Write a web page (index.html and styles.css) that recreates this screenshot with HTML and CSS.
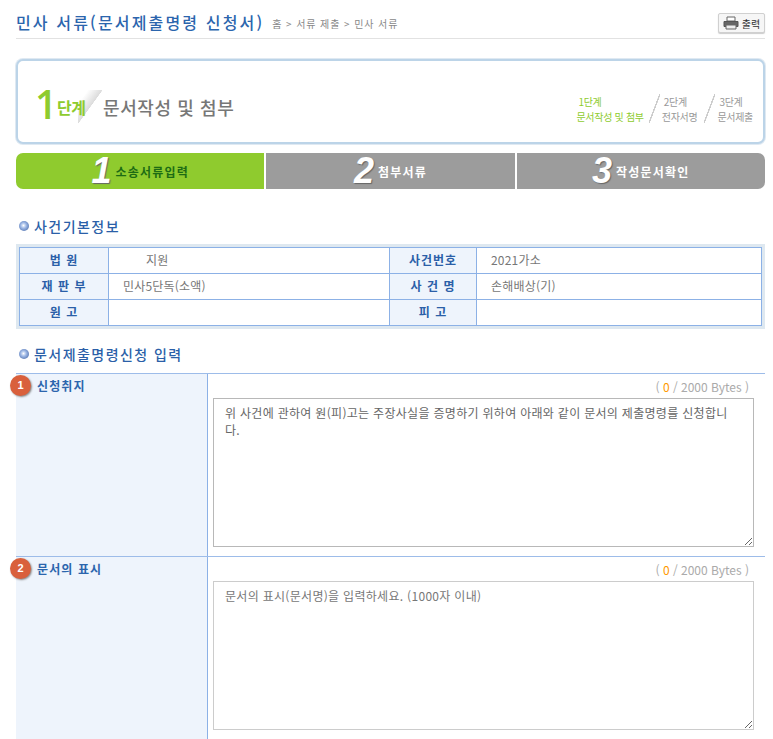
FILE: index.html
```html
<!DOCTYPE html>
<html lang="ko">

<head>
  <meta charset="utf-8">
  <title>민사 서류(문서제출명령 신청서)</title>
  <link rel="stylesheet" href="styles.css">
</head>

<body>
  <div class="page">
    <div class="header">
      <div class="title">민사 서류(문서제출명령 신청서)</div>
      <div class="crumb">홈 &gt; 서류 제출 &gt; 민사 서류</div>
      <div class="print">
        <svg width="16" height="14" viewBox="0 0 16 14">
          <path d="M4 1h8v4H4z" fill="#fff" stroke="#666" />
          <path d="M1 5.500h14v5H1z" fill="#666" stroke="#555" />
          <path d="M3 9h10v4H3z" fill="#eee" stroke="#666" />
        </svg>
        출력
      </div>
    </div>

    <div class="stepBox">
      <div class="stepNow">
        <span class="stepNum">1</span>
        <span class="stepWord">단계</span>
        <span class="stepFold"></span>
        <span class="stepName">문서작성 및 첨부</span>
      </div>
      <div class="stepList">
        <div class="stepItem on"><span>1단계</span><span>문서작성 및 첨부</span></div>
        <div class="stepSlash"></div>
        <div class="stepItem"><span>2단계</span><span>전자서명</span></div>
        <div class="stepSlash"></div>
        <div class="stepItem"><span>3단계</span><span>문서제출</span></div>
      </div>
    </div>

    <div class="tabs">
      <div class="tab on"><span class="tabNum">1</span><span class="tabText">소송서류입력</span></div>
      <div class="tab"><span class="tabNum">2</span><span class="tabText">첨부서류</span></div>
      <div class="tab"><span class="tabNum">3</span><span class="tabText">작성문서확인</span></div>
    </div>

    <div class="sectionTitle first"><span class="dot"></span>사건기본정보</div>
    <div class="infoWrap">
      <table class="info">
        <colgroup>
          <col class="colHead">
          <col class="colValue">
          <col class="colHead2">
          <col>
        </colgroup>
        <tr>
          <th>법 원</th>
          <td><span class="court">지원</span></td>
          <th>사건번호</th>
          <td>2021가소</td>
        </tr>
        <tr>
          <th>재 판 부</th>
          <td>민사5단독(소액)</td>
          <th>사 건 명</th>
          <td>손해배상(기)</td>
        </tr>
        <tr>
          <th>원 고</th>
          <td></td>
          <th>피 고</th>
          <td></td>
        </tr>
      </table>
    </div>

    <div class="sectionTitle second"><span class="dot"></span>문서제출명령신청 입력</div>
    <div class="form">
      <div class="formRow">
        <div class="formLabel"><span class="badge">1</span>신청취지</div>
        <div class="formField">
          <div class="bytes">( <b>0</b> / 2000 Bytes )</div>
          <textarea class="box">위 사건에 관하여 원(피)고는 주장사실을 증명하기 위하여 아래와 같이 문서의 제출명령를 신청합니다.</textarea>
        </div>
      </div>
      <div class="formRow">
        <div class="formLabel"><span class="badge">2</span>문서의 표시</div>
        <div class="formField">
          <div class="bytes">( <b>0</b> / 2000 Bytes )</div>
          <textarea class="box soft">문서의 표시(문서명)을 입력하세요. (1000자 이내)</textarea>
        </div>
      </div>
    </div>
  </div>
</body>

</html>
```

FILE: styles.css
```css
html,
body {
  margin: 0;
  padding: 0;
  background-color: #fff;
}

body {
  font-family: 'Noto Sans CJK KR', 'Liberation Sans', sans-serif;
  font-size: 11px;
  color: #666;
}

.page {
  box-sizing: border-box;
  width: 773px;
  height: 739px;
  padding: 0 8px 0 16px;
  overflow: hidden;
}

/* header */
.header {
  display: flex;
  align-items: flex-end;
  height: 38px;
  border-bottom: 1px solid #e2e2e2;
}

.title {
  color: #2b65ad;
  font-size: 16px;
  font-weight: 500;
  letter-spacing: 2.15px;
  line-height: 20px;
  padding-bottom: 6px;
  white-space: nowrap;
}

.crumb {
  color: #888;
  font-size: 10px;
  line-height: 14px;
  letter-spacing: 0.9px;
  margin-left: 8px;
  padding-bottom: 7px;
  white-space: nowrap;
}

.print {
  display: flex;
  align-items: center;
  justify-content: center;
  gap: 3px;
  width: 45px;
  height: 18px;
  margin-left: auto;
  margin-bottom: 5px;
  border: 1px solid #d0d0d0;
  border-radius: 2px;
  background-color: #f6f6f6;
  box-shadow: 0 1px 1px #ccc;
  color: #333;
  font-size: 10px;
}

/* step box */
.stepBox {
  display: flex;
  justify-content: space-between;
  align-items: flex-end;
  box-sizing: border-box;
  height: 85px;
  margin-top: 20px;
  padding: 0 10px 0 17px;
  border: 2px solid #bcd4e8;
  border-radius: 7px;
  background-color: #fff;
  box-shadow: 0 0 0 1px #dfe9f2;
}

.stepNow {
  display: flex;
  align-items: center;
  height: 40px;
  margin-bottom: 15px;
}

.stepNum {
  width: 22px;
  margin-bottom: 6px;
  color: #8ecb2e;
  font-family: 'Open Sans', sans-serif;
  font-size: 39px;
  font-weight: 600;
  line-height: 40px;
}

.stepWord {
  position: relative;
  z-index: 1;
  width: 31px;
  color: #8ecb2e;
  font-size: 16px;
  font-weight: 700;
  letter-spacing: -0.5px;
  white-space: nowrap;
}

.stepFold {
  width: 25px;
  height: 34px;
  margin-left: -10px;
  background: linear-gradient(-54deg, transparent 50%, #dcdcdc 51%, #fff 80%);
}

.stepName {
  color: #777;
  font-size: 18px;
  font-weight: 500;
  letter-spacing: 0.6px;
}

.stepList {
  display: flex;
  align-items: flex-end;
  margin-bottom: 18px;
}

.stepItem {
  display: flex;
  flex-direction: column;
  align-items: flex-start;
  color: #999;
  font-size: 10px;
  line-height: 15px;
  letter-spacing: -0.3px;
}

.stepItem span:first-child {
  padding-left: 2px;
}

.stepItem.on {
  color: #8ecb2e;
}

.stepSlash {
  width: 11px;
  height: 29px;
  margin: 0 2px 1px 7px;
  background: linear-gradient(to top left, transparent 46%, #ccc 47%, #ccc 53%, transparent 54%);
}

.stepItem.on + .stepSlash {
  margin-left: 5px;
}

/* tabs */
.tabs {
  display: flex;
  gap: 2px;
  margin-top: 9px;
  height: 36px;
}

.tab {
  flex: 1;
  display: flex;
  align-items: center;
  justify-content: center;
  gap: 4px;
  background-color: #9c9c9c;
  color: #fff;
}

.tab:first-child {
  border-radius: 7px 0 0 7px;
}

.tab:last-child {
  border-radius: 0 7px 7px 0;
}

.tab.on {
  background-color: #8fcb2e;
  color: #1d6b14;
}

.tabNum {
  color: #fff;
  font-family: 'Liberation Sans', sans-serif;
  font-size: 36px;
  font-style: italic;
  font-weight: 700;
  line-height: 36px;
  text-shadow: 1px 1px 1px #666;
}

.tabText {
  font-size: 12px;
  font-weight: 700;
  letter-spacing: 1.2px;
}

/* sections */
.sectionTitle {
  display: flex;
  align-items: center;
  color: #2b5fa8;
  font-size: 14px;
  font-weight: 500;
  letter-spacing: 1.45px;
  line-height: 18px;
  padding-left: 3px;
}

.sectionTitle.first {
  margin-top: 28px;
}

.sectionTitle.second {
  margin-top: 16px;
}

.dot {
  width: 10px;
  height: 10px;
  margin-right: 5px;
  border-radius: 50%;
  background: radial-gradient(circle at 45% 45%, #fff 0, #9fb9e6 35%, #35589a 100%);
}

/* info table */
.infoWrap {
  margin-top: 9px;
  border: 3px solid #dee8f0;
}

.info {
  width: 100%;
  border-collapse: collapse;
  table-layout: fixed;
}

.colHead {
  width: 89px;
}

.colValue {
  width: 281px;
}

.colHead2 {
  width: 87px;
}

.info th,
.info td {
  height: 24px;
  padding: 0 0 1px;
  border: 1px solid #8cb1e6;
  font-size: 12px;
  line-height: 14px;
}

.info th {
  background-color: #eef4fc;
  color: #2b5fa8;
  font-weight: 700;
  letter-spacing: 1px;
}

.info td {
  padding-left: 14px;
  color: #777;
  letter-spacing: 0.2px;
}

.court {
  padding-left: 23px;
}

/* form */
.form {
  margin-top: 10px;
  border-top: 1px solid #9dbce9;
}

.formRow {
  display: flex;
  height: 182px;
  border-bottom: 1px solid #9dbce9;
}

.formLabel {
  position: relative;
  box-sizing: border-box;
  width: 192px;
  padding: 4px 0 0 21px;
  border-right: 1px solid #8cb1e6;
  background-color: #eef4fc;
  color: #2b65ad;
  font-size: 12px;
  font-weight: 700;
  letter-spacing: 1.1px;
  line-height: 16px;
}

.badge {
  position: absolute;
  left: -6px;
  top: 1px;
  width: 21px;
  height: 21px;
  border-radius: 50%;
  background-color: #d9603c;
  box-shadow: 1px 1px 2px #888;
  color: #fff;
  font-family: 'Liberation Sans', sans-serif;
  font-size: 11px;
  letter-spacing: 0;
  line-height: 20px;
  text-align: center;
}

.formField {
  flex: 1;
  padding: 5px 11px 0 5px;
}

.bytes {
  color: #aaa;
  font-size: 12px;
  line-height: 16px;
  padding-right: 5px;
  text-align: right;
}

.bytes b {
  color: #f90;
  font-weight: 400;
}

.box {
  display: block;
  box-sizing: border-box;
  width: 541px;
  height: 149px;
  margin-top: 3px;
  padding: 5px 11px;
  border: 1px solid #b8b8b8;
  border-radius: 0;
  outline: none;
  color: #666;
  font-family: 'Noto Sans CJK KR', 'Liberation Sans', sans-serif;
  font-size: 12px;
  letter-spacing: 0.3px;
  line-height: 17px;
}

.box.soft {
  border-color: #ccc;
  color: #777;
}
```
